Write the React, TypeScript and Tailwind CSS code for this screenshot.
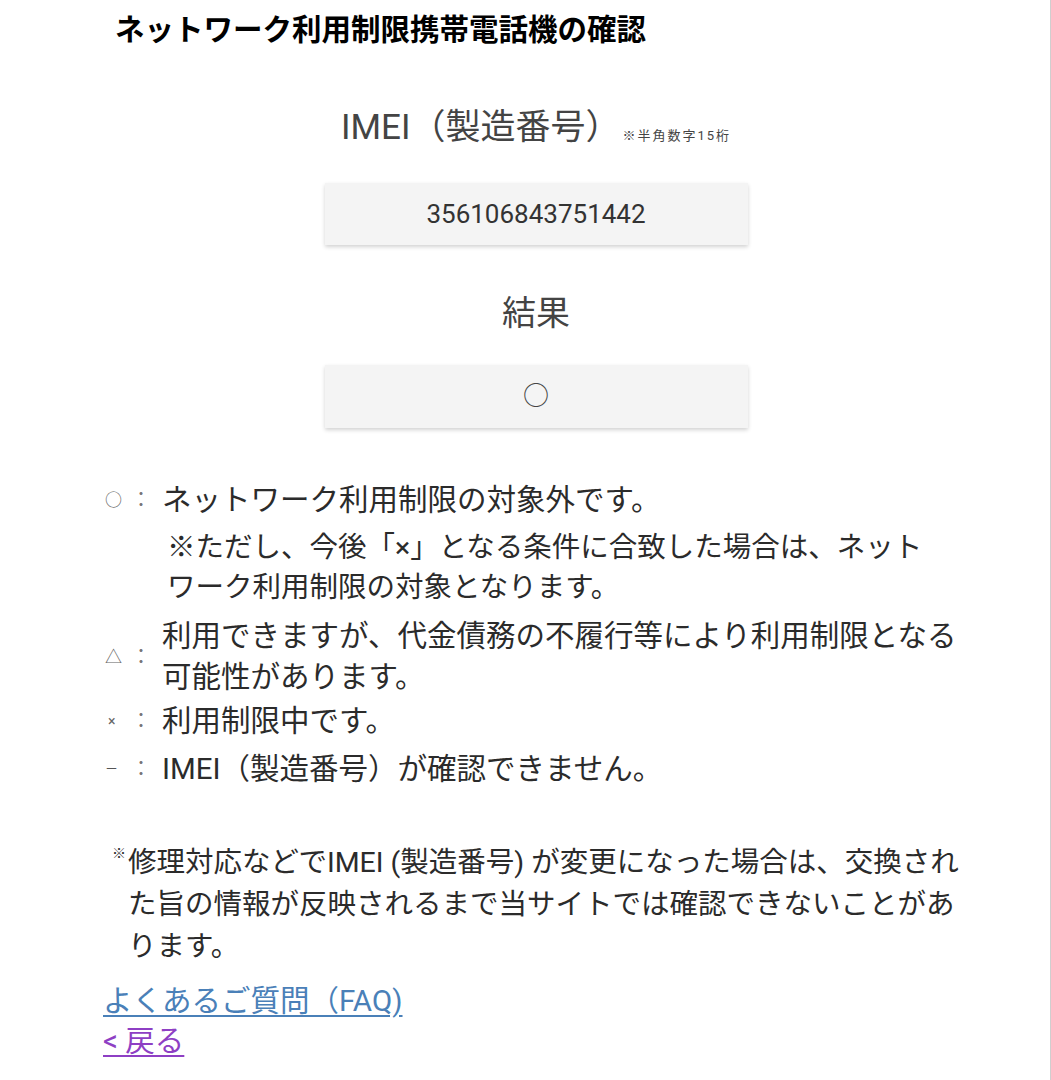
const font = "font-['Roboto','Noto_Sans_CJK_JP',sans-serif]";

function Legend() {
  return (
    <div className="pl-[105px] text-[29.5px] leading-[40px] text-[#2b2b2b]">
      <div className="flex items-center">
        <span className="w-[26px] text-[17px] text-[#666]">○</span>
        <span className="w-[20px] text-[20px] text-[#777]">：</span>
        <span className="ml-[11px]">ネットワーク利用制限の対象外です。</span>
      </div>
      <p className="mt-2 ml-[62px] w-[770px] text-[28.5px]">
        ※ただし、今後「×」となる条件に合致した場合は、ネットワーク利用制限の対象となります。
      </p>
      <div className="mt-2 flex items-center">
        <span className="w-[26px] text-[17px] text-[#666]">△</span>
        <span className="w-[20px] text-[20px] text-[#777]">：</span>
        <span className="ml-[11px] w-[800px] leading-[41px]">
          利用できますが、代金債務の不履行等により利用制限となる可能性があります。
        </span>
      </div>
      <div className="mt-[3px] flex items-center">
        <span className="w-[26px] pl-[3px] text-[14px] text-[#666]">×</span>
        <span className="w-[20px] text-[20px] text-[#777]">：</span>
        <span className="ml-[11px]">利用制限中です。</span>
      </div>
      <div className="mt-2 flex items-center">
        <span className="w-[26px] text-[13px] text-[#555]">－</span>
        <span className="w-[20px] text-[20px] text-[#777]">：</span>
        <span className="ml-[11px]">IMEI（製造番号）が確認できません。</span>
      </div>
    </div>
  );
}

export default function App() {
  return (
    <div className={`${font} min-h-screen w-full border-r border-[#cfcfcf] bg-white pb-4`}>
      <h1 className="pl-[115px] pt-[10px] text-[29.5px] font-bold leading-[40px] text-black">
        ネットワーク利用制限携帯電話機の確認
      </h1>

      <section className="flex flex-col items-center pl-[22px]">
        <div className="mt-[54px] flex items-end">
          <span className="text-[35px] leading-[48px] text-[#444]">IMEI（製造番号）</span>
          <span className="mb-[9px] ml-[2px] text-[13px] leading-[14px] tracking-[2px] text-[#444]">
            ※半角数字15桁
          </span>
        </div>
        <div className="mt-[31px] flex h-[62px] w-[423px] items-center justify-center bg-[#f4f4f4] text-[26px] text-[#333] shadow-[0_2px_4px_rgba(0,0,0,0.18)]">
          356106843751442
        </div>

        <div className="mt-[44px] text-[34px] leading-[48px] text-[#444]">結果</div>
        <div className="mt-[28px] flex h-[63px] w-[423px] items-center justify-center bg-[#f4f4f4] text-[26px] text-[#444] shadow-[0_2px_4px_rgba(0,0,0,0.18)]">
          ○
        </div>
      </section>

      <div className="mt-[52px]">
        <Legend />
      </div>

      <div className="mt-[53px] flex pl-[112px] text-[#2b2b2b]">
        <span className="pt-[4px] text-[14px] leading-[14px]">※</span>
        <p className="ml-[2px] w-[840px] text-[28.5px] leading-[42px]">
          修理対応などでIMEI (製造番号) が変更になった場合は、交換された旨の情報が反映されるまで当サイトでは確認できないことがあります。
        </p>
      </div>

      <div className="mt-[13px] flex flex-col items-start pl-[103px] text-[29.5px] leading-[40px]">
        <a href="#" className="text-[#4a80b8] underline underline-offset-4">
          よくあるご質問（FAQ)
        </a>
        <a href="#" className="text-[#8e3fc4] underline underline-offset-4">
          &lt; 戻る
        </a>
      </div>
    </div>
  );
}
